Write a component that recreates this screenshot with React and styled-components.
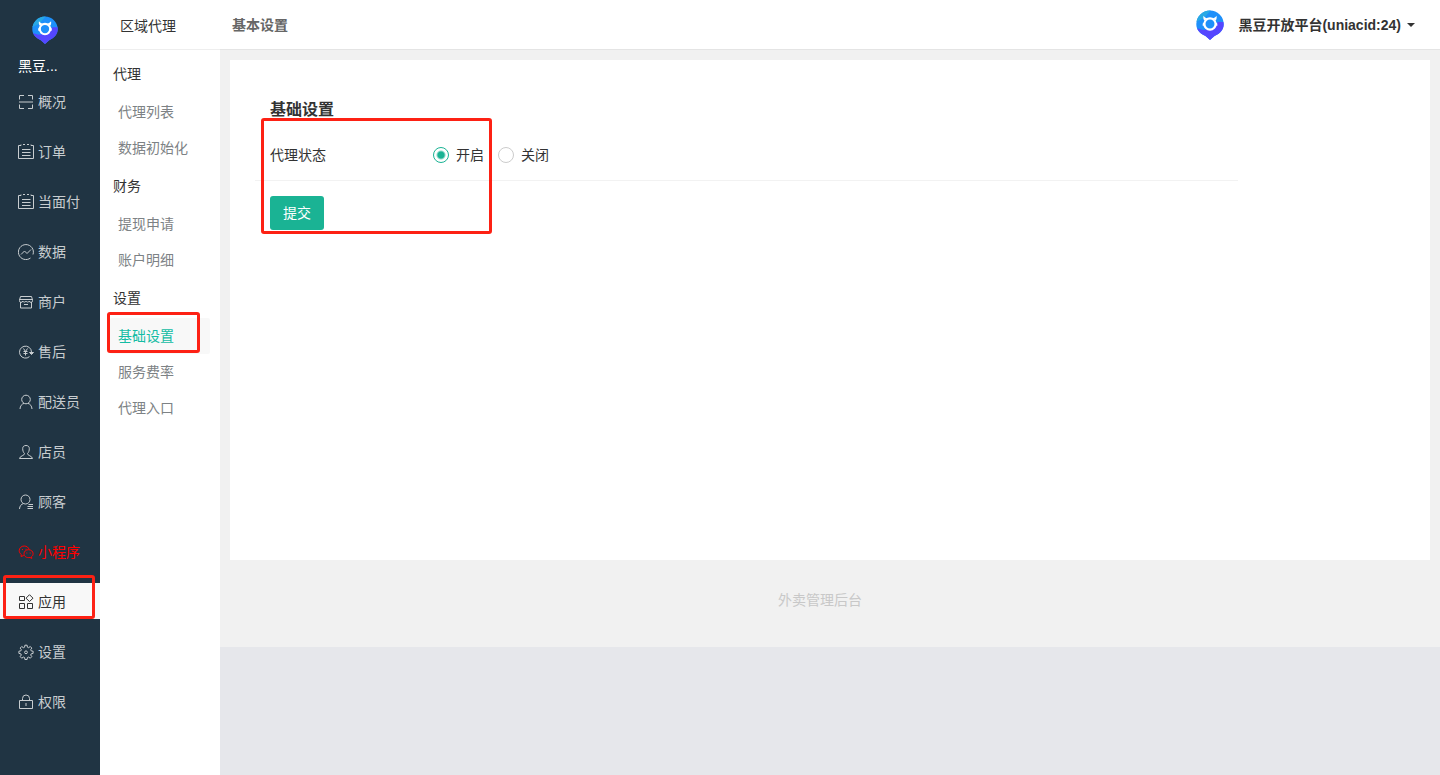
import React, { useState } from "react";
import styled, { createGlobalStyle } from "styled-components";

const ICONS = {
  overview: (
    <path d="M1.500 5.500v-4H6M10 1.500h4.500v4M1.500 10.500v4H6M10 14.500h4.500v-4M1 8h14" />
  ),
  order: (
    <path d="M3 1.500H.5v13h15v-13H13M5 .5h2M9 .5h2M3 .5v1M13 .5v1M4 5.500h8.500M4 8.500h8.500M4 11.500h8.500" />
  ),
  data: (
    <>
      <path d="M12.500 14A7.500 7.500 0 1 1 15 10.500" />
      <path d="M3 10.500L6.500 7l2.500 2.500L13 5.500" />
    </>
  ),
  shop: (
    <>
      <path d="M2.500 2.500h11l1 3.500v.5a1.500 1.500 0 0 1-3.200.5 1.800 1.800 0 0 1-3.300 0 1.800 1.800 0 0 1-3.300 0A1.500 1.500 0 0 1 1.500 6.500V6z" />
      <path d="M1.500 5.500h13M2.500 8v6h11V8M6 10.500h4" />
    </>
  ),
  refund: (
    <>
      <path d="M11.500 12.600A6 6 0 1 1 13.500 8v2" />
      <path d="M11.500 8.500l2 2 2-2z" fill="currentColor" />
      <path d="M5.500 4.500l2 3 2-3M7.500 7.500v4M5.500 7.500h4M5.500 9.500h4" />
    </>
  ),
  courier: (
    <>
      <circle cx="8" cy="5.500" r="4.300" />
      <path d="M2 15c.2-3 1.700-5 4-5.600M14 15c-.2-3-1.700-5-4-5.600" />
    </>
  ),
  clerk: (
    <path d="M6.500 9.500C5.200 8.300 4.700 6.500 4.700 4.500 4.700 2.500 6 1.500 8 1.500s3.300 1 3.300 3c0 2-.5 3.800-1.800 5 0 2.500 4.500 2 5 5h-13c.5-3 5-2.500 5-5z" />
  ),
  customer: (
    <>
      <circle cx="7.500" cy="5.500" r="4.500" />
      <path d="M1.500 15c.2-3 1.700-4.800 4-5.500M10.500 10.500h4.500M9.500 12.500H15M9.500 14.500H15" />
    </>
  ),
  wechat: (
    <>
      <path d="M5.800 11.500l-2.800 1 .3-2C1.800 9.500 1.200 8 1.200 6.700c0-2.700 2.300-4.700 5-4.700 2.500 0 4.400 1.500 4.900 3.500" />
      <path d="M10.500 5.700c2.600 0 4.600 1.700 4.600 4 0 1.300-.6 2.300-1.600 3l.3 1.700-1.800-.9c-3.200.7-6-1-6-3.800 0-2.300 2-4 4.500-4z" />
      <path d="M4.500 5v1M8 4.800v1M8.800 8.500v1M12.200 8.500v1" />
    </>
  ),
  apps: (
    <path d="M1.500 2.500h5v4h-5zM1.500 9.500h5v5h-5zM9.500 9.500h5v5h-5zM11.500 .7L15 4.200 11.500 7.500 8 4.200z" />
  ),
  settings: (
    <>
      <path d="M6.900 1.200h2.200l.3 2 1.200.5 1.700-1.200 1.500 1.600-1.100 1.600.5 1.200 1.900.3v2.200l-1.900.4-.5 1.200 1.100 1.600-1.500 1.600-1.700-1.100-1.200.5-.3 1.900H6.900l-.3-1.900-1.200-.5-1.700 1.100-1.500-1.600 1.100-1.600-.5-1.200-1.900-.4V7.200l1.900-.3.5-1.200-1.100-1.600 1.500-1.600 1.700 1.200 1.200-.5z" />
      <circle cx="8" cy="8.300" r="1.400" />
    </>
  ),
  lock: (
    <path d="M1.500 6.500h13v8h-13zM4.500 6.500V4.500a3.500 3.500 0 0 1 7 0v2M8 9v3" />
  ),
};

const MENU = [
  { label: "概况", icon: "overview" },
  { label: "订单", icon: "order" },
  { label: "当面付", icon: "order" },
  { label: "数据", icon: "data" },
  { label: "商户", icon: "shop" },
  { label: "售后", icon: "refund" },
  { label: "配送员", icon: "courier" },
  { label: "店员", icon: "clerk" },
  { label: "顾客", icon: "customer" },
  { label: "小程序", icon: "wechat", color: "#f00" },
  { label: "应用", icon: "apps", active: true },
  { label: "设置", icon: "settings" },
  { label: "权限", icon: "lock" },
];

const GROUPS = [
  { title: "代理", items: ["代理列表", "数据初始化"] },
  { title: "财务", items: ["提现申请", "账户明细"] },
  { title: "设置", items: ["基础设置", "服务费率", "代理入口"] },
];

const Icon = ({ name }) => (
  <IconSvg viewBox="0 0 16 16" aria-hidden="true">
    {ICONS[name]}
  </IconSvg>
);

const Logo = ({ size, id }) => (
  <LogoSvg $size={size} viewBox="0 0 28 30" aria-hidden="true">
    <clipPath id={id}>
      <path d="M14 .5a13.700 13.700 0 0 1 13.700 13.500c0 6-3.700 9.500-9.200 12L14 30l-4.500-4C4 23.500.3 20 .3 14A13.700 13.700 0 0 1 14 .5z" />
    </clipPath>
    <g clipPath={`url(#${id})`}>
      <rect width="28" height="30" fill="#1e90fa" />
      <path d="M0 0h15L8 8 0 12z" fill="#29a9e4" />
      <path d="M0 18l7 2 8-1 7-7h6v18H0z" fill="#5546ff" />
    </g>
    <circle cx="14" cy="14" r="5.600" fill="#1e90fa" stroke="#fff" strokeWidth="2.200" />
    <path
      d="M8.300 10.500c-1-1.500-1.200-3-.8-4.800 1 1.400 2.200 2.200 4 2.600zM19.700 10.500c1-1.500 1.200-3 .8-4.800-1 1.400-2.200 2.200-4 2.600zM7 12.500l2 1-.5 2.500-2-.5zM21 12.500l-2 1 .5 2.500 2-.5z"
      fill="#fff"
    />
  </LogoSvg>
);

const Sidebar = () => (
  <SideNav>
    <Brand>
      <Logo size={26} id="brand-logo" />
      <BrandName>黑豆...</BrandName>
    </Brand>
    <MenuList>
      {MENU.map(({ label, icon, color, active }) => (
        <MenuItem key={label}>
          <MenuLink href="#" $color={color} $active={active}>
            <Icon name={icon} />
            {label}
          </MenuLink>
          {active && <MenuMark />}
        </MenuItem>
      ))}
    </MenuList>
  </SideNav>
);

const SubMenu = () => (
  <SubNav>
    <SubHeader>区域代理</SubHeader>
    <Groups>
      {GROUPS.map(({ title, items }) => (
        <section key={title}>
          <GroupTitle>{title}</GroupTitle>
          {items.map((item) => (
            <SubItem key={item}>
              <SubLink href="#" $active={item === "基础设置"}>
                {item}
              </SubLink>
              {item === "基础设置" && <SubMark />}
            </SubItem>
          ))}
        </section>
      ))}
    </Groups>
  </SubNav>
);

const AgentForm = () => {
  const [status, setStatus] = useState("on");

  return (
    <Form onSubmit={(e) => e.preventDefault()}>
      <FormTitle>基础设置</FormTitle>
      <FormRow>
        <FormLabel id="agent-status">代理状态</FormLabel>
        <Radios role="radiogroup" aria-labelledby="agent-status">
          <RadioLabel>
            <Radio
              name="status"
              checked={status === "on"}
              onChange={() => setStatus("on")}
            />
            开启
          </RadioLabel>
          <RadioLabel>
            <Radio
              name="status"
              checked={status === "off"}
              onChange={() => setStatus("off")}
            />
            关闭
          </RadioLabel>
        </Radios>
      </FormRow>
      <Submit type="submit">提交</Submit>
      <FormMark />
    </Form>
  );
};

const App = () => (
  <>
    <GlobalStyle />
    <Layout>
      <Sidebar />
      <SubMenu />
      <Main>
        <TopBar>
          <PageTitle>基本设置</PageTitle>
          <Account type="button">
            <Logo size={28} id="account-logo" />
            黑豆开放平台(uniacid:24)
            <Caret />
          </Account>
        </TopBar>
        <Content>
          <Panel>
            <AgentForm />
          </Panel>
          <Footer>外卖管理后台</Footer>
        </Content>
      </Main>
    </Layout>
  </>
);

const GlobalStyle = createGlobalStyle`
  * {
    box-sizing: border-box;
  }

  body {
    margin: 0;
    background: #e6e7eb;
    color: #333;
    font-family: "Liberation Sans", "Noto Sans CJK SC", sans-serif;
    font-size: 14px;
    line-height: 20px;
  }

  a {
    text-decoration: none;
  }

  button,
  input {
    font: inherit;
  }
`;

const Layout = styled.div`
  display: flex;
  min-height: 100vh;
`;

const SideNav = styled.nav`
  flex: 0 0 100px;
  background: #203443;
`;

const Brand = styled.div`
  display: flex;
  flex-direction: column;
  gap: 12px;
  padding: 16px 18px 7px;
`;

const BrandName = styled.div`
  color: #fff;
`;

const LogoSvg = styled.svg`
  flex: none;
  width: ${({ $size }) => $size}px;
  height: ${({ $size }) => $size + 2}px;

  ${Brand} & {
    margin-left: 14px;
  }
`;

const MenuList = styled.ul`
  display: flex;
  flex-direction: column;
  gap: 14px;
  margin: 0;
  padding: 0;
  list-style: none;
`;

const MenuItem = styled.li`
  position: relative;
`;

const MenuLink = styled.a`
  display: flex;
  align-items: center;
  gap: 4px;
  height: 36px;
  padding: 2px 0 0 18px;
  white-space: nowrap;
  color: ${({ $color, $active }) => $color || ($active ? "#333" : "#c8cdd0")};
  background: ${({ $active }) => ($active ? "#f8f8f8" : "transparent")};
`;

const IconSvg = styled.svg`
  flex: none;
  width: 16px;
  height: 16px;
  fill: none;
  stroke: currentColor;
  stroke-width: 1;
`;

const Mark = styled.span`
  position: absolute;
  border: 3px solid #fd2114;
  border-radius: 3px;
  pointer-events: none;
`;

const MenuMark = styled(Mark)`
  top: -8px;
  right: 5px;
  bottom: 0;
  left: 3px;
`;

const SubNav = styled.nav`
  flex: 0 0 120px;
  background: #fff;
`;

const SubHeader = styled.div`
  height: 50px;
  padding: 16px 20px 13px;
  border-bottom: 1px solid #eee;
`;

const Groups = styled.div`
  padding: 4px 10px;
`;

const GroupTitle = styled.h3`
  margin: 0;
  padding: 0 3px;
  font-size: 14px;
  font-weight: 400;
  line-height: 40px;
`;

const SubItem = styled.div`
  position: relative;
`;

const SubLink = styled.a`
  display: block;
  padding: 0 8px;
  border-radius: 2px;
  line-height: 36px;
  color: ${({ $active }) => ($active ? "#14bca4" : "#7d8285")};
  background: ${({ $active }) => ($active ? "#f8f8f8" : "transparent")};
`;

const SubMark = styled(Mark)`
  top: -6px;
  right: 10px;
  bottom: 1px;
  left: -3px;
`;

const Main = styled.main`
  flex: 1;
  min-width: 0;
`;

const TopBar = styled.header`
  display: flex;
  align-items: center;
  justify-content: space-between;
  height: 50px;
  padding: 0 25px 0 12px;
  border-bottom: 1px solid #e4e4e4;
  background: #fff;
`;

const PageTitle = styled.h1`
  margin: 0;
  font-size: 14px;
  font-weight: 700;
  color: #666;
`;

const Account = styled.button`
  display: flex;
  align-items: center;
  padding: 0;
  border: 0;
  background: none;
  color: #333;
  font-weight: 700;
  cursor: pointer;

  ${LogoSvg} {
    margin-right: 14px;
  }
`;

const Caret = styled.span`
  margin-left: 6px;
  border-top: 4px solid #333;
  border-right: 4px solid transparent;
  border-left: 4px solid transparent;
`;

const Content = styled.div`
  padding: 10px 10px 0;
  background: #f1f1f1;
`;

const Panel = styled.section`
  min-height: 500px;
  padding: 40px 16% 40px 25px;
  background: #fff;
`;

const Form = styled.form`
  position: relative;
`;

const FormTitle = styled.h2`
  margin: 0;
  padding: 0 15px;
  font-size: 16px;
  font-weight: 700;
  line-height: 20px;
`;

const FormRow = styled.div`
  display: flex;
  align-items: center;
  margin-bottom: 15px;
  padding: 25px 15px 15px;
  border-bottom: 1px solid #f2f2f2;
`;

const FormLabel = styled.span`
  flex: 0 0 163px;
`;

const Radios = styled.div`
  display: flex;
  gap: 14px;
`;

const RadioLabel = styled.label`
  display: flex;
  align-items: center;
  gap: 7px;
  cursor: pointer;
`;

const Radio = styled.input.attrs({ type: "radio" })`
  appearance: none;
  width: 16px;
  height: 16px;
  margin: 0;
  border: 1px solid #ccc;
  border-radius: 50%;
  background: #fff;

  &:checked {
    border-color: #1ab394;
    background: radial-gradient(circle, #1ab394 3px, #fff 5px);
  }
`;

const Submit = styled.button`
  display: block;
  height: 34px;
  margin-left: 15px;
  padding: 0 13px;
  border: 0;
  border-radius: 3px;
  background: #1ab394;
  color: #fff;
  cursor: pointer;
`;

const FormMark = styled(Mark)`
  top: 18px;
  bottom: -4px;
  left: 6px;
  width: 231px;
`;

const Footer = styled.footer`
  padding: 30px 20px 37px 0;
  text-align: center;
  color: #c8c8c8;
`;

export default App;
